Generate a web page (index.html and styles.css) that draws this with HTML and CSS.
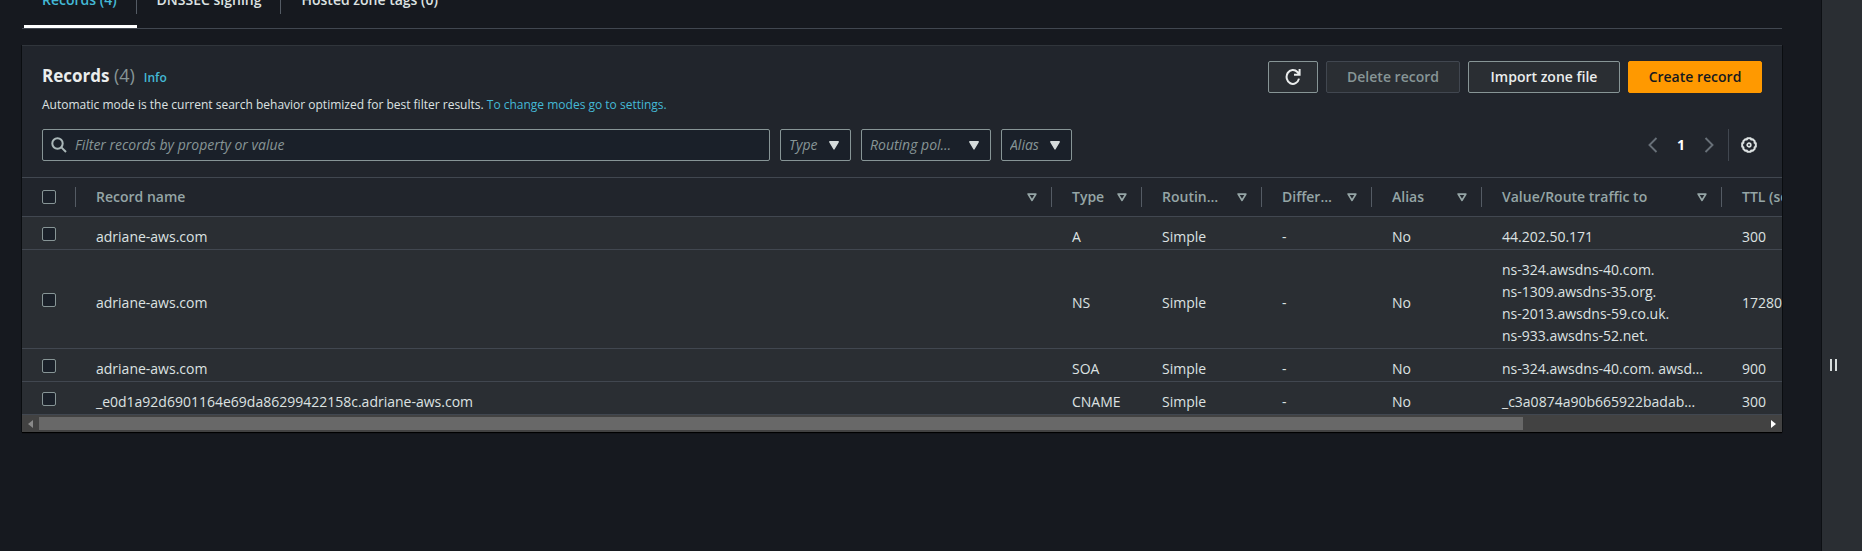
FILE: index.html
```html
<!DOCTYPE html>
<html lang="en">
<head>
<meta charset="utf-8">
<title>Hosted zone records</title>
<link rel="stylesheet" href="styles.css">
</head>
<body>
<svg class="sprite" aria-hidden="true">
  <symbol id="caret" viewBox="0 0 10 9"><path d="M.8.8h8.4L5 8z" fill="currentColor" stroke="currentColor" stroke-width="1.4" stroke-linejoin="round"/></symbol>
  <symbol id="sort" viewBox="0 0 10 9"><path d="M1.2 1.1h7.6L5 7.4z" fill="none" stroke="currentColor" stroke-width="1.8" stroke-linejoin="round"/></symbol>
</svg>
<div class="layout">
  <main class="content">
    <nav class="tabs">
      <a class="tab active" href="#records">Records (4)</a>
      <a class="tab" href="#dnssec">DNSSEC signing</a>
      <a class="tab" href="#tags">Hosted zone tags (0)</a>
    </nav>
    <section class="panel" id="records">
      <header class="panel-head">
        <div class="title-row">
          <div class="title">
            <h2>Records <span class="count">(4)</span></h2>
            <a class="info" href="#info">Info</a>
          </div>
          <div class="actions">
            <button class="btn btn-icon" aria-label="Refresh"><svg viewBox="0 0 16 18" width="16" height="18"><path d="M14 10.6A6.3 7 0 1 1 12.4 4L14.2 6M14.6 1v5.8H9" fill="none" stroke="currentColor" stroke-width="2"/></svg></button>
            <button class="btn btn-delete" disabled>Delete record</button>
            <button class="btn btn-import">Import zone file</button>
            <button class="btn btn-create">Create record</button>
          </div>
        </div>
        <p class="description">Automatic mode is the current search behavior optimized for best filter results. <a href="#settings">To change modes go to settings.</a></p>
        <div class="filters">
          <label class="search">
            <svg viewBox="0 0 16 16" width="16" height="16"><circle cx="6.5" cy="6.5" r="5.2" fill="none" stroke="currentColor" stroke-width="2"/><path d="M10.4 10.4l4.6 4.6" stroke="currentColor" stroke-width="2"/></svg>
            <input type="text" placeholder="Filter records by property or value" aria-label="Filter records">
          </label>
          <div class="select"><select aria-label="Type"><option>Type</option></select><svg><use href="#caret"/></svg></div>
          <div class="select select-wide"><select aria-label="Routing policy"><option>Routing pol…</option></select><svg><use href="#caret"/></svg></div>
          <div class="select"><select aria-label="Alias"><option>Alias</option></select><svg><use href="#caret"/></svg></div>
          <div class="pager">
            <button class="arrow" aria-label="Previous page"><svg viewBox="0 0 10 16" width="10" height="16"><path d="M8.5 1L1.5 8l7 7" fill="none" stroke="currentColor" stroke-width="1.9"/></svg></button>
            <button class="page">1</button>
            <button class="arrow" aria-label="Next page"><svg viewBox="0 0 10 16" width="10" height="16"><path d="M1.5 1l7 7-7 7" fill="none" stroke="currentColor" stroke-width="1.9"/></svg></button>
            <div class="settings"><button aria-label="Preferences"><svg viewBox="0 0 16 16" width="16" height="16" fill="none" stroke="currentColor"><path stroke-width="2" stroke-linejoin="round" d="M6.3 1.2h3.4l.4 1.2 1.6-.1 2 2-.1 1.6 1.2.4v3.4l-1.2.4.1 1.6-2 2-1.6-.1-.4 1.2H6.3l-.4-1.2-1.6.1-2-2 .1-1.6-1.2-.4V6.3l1.2-.4-.1-1.6 2-2 1.6.1z"/><circle cx="8" cy="8" r="1.8" stroke-width="1.7"/></svg></button></div>
          </div>
        </div>
      </header>
      <div class="table-wrap">
        <table>
          <colgroup><col class="c-check"><col><col class="c-type"><col class="c-routing"><col class="c-differ"><col class="c-alias"><col class="c-value"><col class="c-ttl"></colgroup>
          <thead>
            <tr>
              <th><div class="th-check"><input type="checkbox" aria-label="Select all records"></div></th>
              <th><div class="th">Record name<svg><use href="#sort"/></svg></div></th>
              <th><div class="th">Type<svg><use href="#sort"/></svg></div></th>
              <th><div class="th">Routin…<svg><use href="#sort"/></svg></div></th>
              <th><div class="th">Differ…<svg><use href="#sort"/></svg></div></th>
              <th><div class="th">Alias<svg><use href="#sort"/></svg></div></th>
              <th><div class="th">Value/Route traffic to<svg><use href="#sort"/></svg></div></th>
              <th><div class="th">TTL (seconds)</div></th>
            </tr>
          </thead>
          <tbody>
            <tr><td class="check"><input type="checkbox" aria-label="Select A record"></td><td>adriane-aws.com</td><td>A</td><td>Simple</td><td>-</td><td>No</td><td>44.202.50.171</td><td>300</td></tr>
            <tr><td class="check"><input type="checkbox" aria-label="Select NS record"></td><td>adriane-aws.com</td><td>NS</td><td>Simple</td><td>-</td><td>No</td><td>ns-324.awsdns-40.com.<br>ns-1309.awsdns-35.org.<br>ns-2013.awsdns-59.co.uk.<br>ns-933.awsdns-52.net.</td><td>172800</td></tr>
            <tr><td class="check"><input type="checkbox" aria-label="Select SOA record"></td><td>adriane-aws.com</td><td>SOA</td><td>Simple</td><td>-</td><td>No</td><td>ns-324.awsdns-40.com. awsd…</td><td>900</td></tr>
            <tr><td class="check"><input type="checkbox" aria-label="Select CNAME record"></td><td>_e0d1a92d6901164e69da86299422158c.adriane-aws.com</td><td>CNAME</td><td>Simple</td><td>-</td><td>No</td><td>_c3a0874a90b665922badab…</td><td>300</td></tr>
          </tbody>
        </table>
      </div>
      <div class="scrollbar">
        <svg class="sb-left" viewBox="0 0 5 8"><path d="M5 0v8L0 4z" fill="currentColor"/></svg>
        <div class="track"><div class="thumb"></div></div>
        <svg class="sb-right" viewBox="0 0 5 8"><path d="M0 0v8l5-4z" fill="currentColor"/></svg>
      </div>
    </section>
  </main>
  <aside class="side">
    <button aria-label="Open side panel"><span></span><span></span></button>
  </aside>
</div>
</body>
</html>
```
FILE: styles.css
```css
* { box-sizing: border-box; }
html, body { height: 100%; }
body {
  margin: 0;
  overflow: hidden;
  background: #16191f;
  color: #dde2e2;
  font: 14px/22px "Open Sans", "Noto Sans", sans-serif;
}
button, input, select { font: inherit; color: inherit; margin: 0; }
button { background: none; border: 0; padding: 0; }
svg { display: block; flex: none; }
a { color: #44b9d6; text-decoration: none; }
.sprite { position: absolute; width: 0; height: 0; }

.layout { display: flex; min-height: 100%; }
.content { flex: 1; min-width: 0; padding: 0 40px 0 22px; }

.tabs { display: flex; height: 40px; margin-top: -11px; border-bottom: 1px solid #414750; }
.tab {
  position: relative;
  height: 25px;
  padding: 0 19px 0 20px;
  color: #dde2e2;
  font-weight: 600;
  border-right: 1px solid #545b64;
}
.tab:last-child { border-right: 0; }
.tab.active { color: #44b9d6; }
.tab.active::after {
  content: "";
  position: absolute;
  left: 2px;
  right: -1px;
  top: 36px;
  height: 3px;
  background: #fff;
}

.panel {
  margin-top: 16px;
  background: #21252c;
  border-top: 1px solid #30353b;
  box-shadow: 0 1px 1px #000, -1px 0 0 #0d1014, 1px 0 0 #0d1014;
}
.panel-head { padding: 15px 20px 16px; }
.title-row { display: flex; justify-content: space-between; height: 32px; }
.title { display: flex; align-items: baseline; gap: 9px; }
h2 { margin: 0; color: #eaeded; font-size: 17px; line-height: 28px; font-weight: 700; }
.count { color: #879596; font-size: 18px; font-weight: 400; }
.info { font-size: 12px; font-weight: 600; }
.actions { display: flex; gap: 8px; }
.btn {
  display: flex;
  align-items: center;
  justify-content: center;
  height: 32px;
  background: #2a2e33;
  border: 1px solid #879596;
  border-radius: 2px;
  color: #eaeded;
  font-weight: 600;
}
.btn-icon { width: 50px; }
.btn-delete { width: 134px; border-color: #414750; color: #879596; }
.btn-import { width: 152px; }
.btn-create { width: 134px; background: #f90; border-color: #f90; color: #16191f; }
.description { margin: 1px 0 13px; font-size: 12px; }

.filters { display: flex; gap: 10px; }
.search {
  display: flex;
  flex: 0 1 728px;
  align-items: center;
  height: 32px;
  padding: 0 8px;
  background: #1a2029;
  border: 1px solid #879596;
  border-radius: 2px;
}
.search input { flex: 1; min-width: 0; padding: 0 8px; border: 0; background: none; outline: 0; }
.search svg { color: #aab7b8; }
::placeholder { color: #879596; opacity: 1; font-style: italic; }
.select { position: relative; width: 71px; }
.select-wide { width: 130px; }
.select select {
  appearance: none;
  width: 100%;
  height: 32px;
  padding: 0 8px;
  background: #1a2029;
  border: 1px solid #879596;
  border-radius: 2px;
  color: #879596;
  font-style: italic;
}
.select svg { position: absolute; right: 12px; top: 12px; width: 10px; height: 9px; color: #d5dbdb; pointer-events: none; }
.pager { display: flex; align-items: center; margin-left: auto; height: 32px; }
.arrow { color: #687078; }
.page { width: 46px; color: #fff; font-weight: 700; }
.settings { display: flex; align-items: center; height: 32px; margin-left: 14px; padding: 0 5px 0 12px; border-left: 1px solid #414750; }

.table-wrap { overflow: hidden; border-top: 1px solid #414750; }
table { width: calc(100% + 286px); table-layout: fixed; border-spacing: 0; }
.c-check { width: 54px; }
.c-type { width: 90px; }
.c-routing { width: 120px; }
.c-differ, .c-alias { width: 110px; }
.c-value { width: 240px; }
.c-ttl { width: 346px; }
th { height: 39px; padding: 0; border-bottom: 1px solid #414750; color: #95a5a6; text-align: left; font-weight: 600; }
.th, .th-check { display: flex; align-items: center; height: 20px; border-right: 1px solid #545b64; white-space: nowrap; }
.th { justify-content: space-between; padding: 0 14px 0 20px; }
.th-check { padding-left: 20px; }
.th svg { width: 10px; height: 9px; }
td { padding: 9px 0 1px 20px; background: #2a2e33; border-bottom: 1px solid #414750; white-space: nowrap; }
td.check { padding: 2px 0 0 20px; }
input[type="checkbox"] {
  appearance: none;
  display: block;
  width: 14px;
  height: 14px;
  background: #1a2029;
  border: 1px solid #879596;
  border-radius: 2px;
}

.scrollbar { display: flex; align-items: center; height: 17px; padding: 0 6px; background: #424242; }
.scrollbar svg { width: 5px; height: 8px; }
.sb-left { color: #8a8a8a; }
.sb-right { color: #fff; }
.track { flex: 1; margin: 0 6px; }
.thumb { width: 86%; height: 13px; background: #686868; }

.side {
  display: flex;
  justify-content: center;
  width: 41px;
  margin-left: -1px;
  padding-top: 359px;
  background: #2a2e33;
  border-left: 1px solid #0d1014;
}
.side button { display: flex; gap: 3px; height: 12px; margin-right: 18px; }
.side span { width: 2px; height: 12px; background: #d5dbdb; }
```
